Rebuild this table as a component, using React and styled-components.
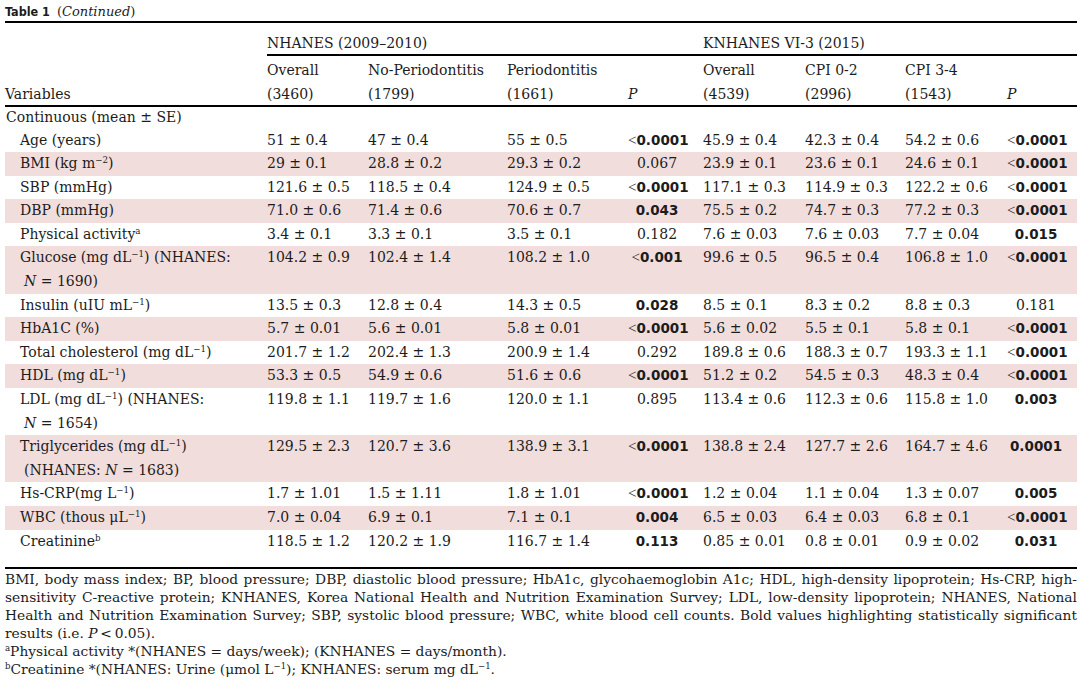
import React from 'react';
import styled, { createGlobalStyle } from 'styled-components';

const Global = createGlobalStyle`
  html, body { margin: 0; padding: 0; background: #fff; }
  body { font-family: "DejaVu Serif", serif; color: #1c1c1c; }
`;

const Page = styled.div`
  width: 1080px;
  height: 687px;
  box-sizing: border-box;
  padding: 0 3px 0 5px;
  overflow: hidden;
`;

const Caption = styled.div`
  height: 21px;
  display: flex;
  align-items: flex-end;
  gap: 7px;
  padding-bottom: 1px;
  box-sizing: border-box;
`;

const CapLabel = styled.span`
  font-family: "DejaVu Sans Condensed", "Liberation Sans Narrow", "Arial Narrow", "Liberation Sans", sans-serif;
  font-weight: 700;
  font-size: 12.5px;
  line-height: 16px;
`;

const CapNote = styled.span`
  font-family: "DejaVu Serif", serif;
  font-size: 13px;
  line-height: 16px;
  i { font-style: italic; }
`;

const Table = styled.table`
  width: 1072px;
  table-layout: fixed;
  border-collapse: separate;
  border-spacing: 0;
  font-size: 14px;
`;

const GroupCell = styled.th`
  font-weight: 400;
  text-align: left;
  vertical-align: bottom;
  height: 31px;
  padding: 0;
  line-height: 22px;
  border-top: 2px solid #000;
  border-bottom: ${p => (p.$rule ? '2px solid #000' : '0')};
`;

const HeadCell = styled.th`
  font-weight: 400;
  text-align: left;
  padding: 0;
  padding-top: ${p => (p.$first ? '3px' : '2px')};
  line-height: 22px;
  border-bottom: ${p => (p.$rule ? '2px solid #000' : '0')};
  white-space: nowrap;
`;

const Row = styled.tr`
  & > td {
    background: ${p => (p.$shade ? '#f1dedc' : 'transparent')};
  }
`;

const Cell = styled.td`
  padding: 0;
  padding-left: ${p => p.$indent || 0}px;
  padding-bottom: ${p => (p.$last ? '14px' : '0')};
  border-bottom: ${p => (p.$last ? '2px solid #000' : '0')};
  line-height: ${p => (p.$tight ? '21.5px' : '23.6px')};
  vertical-align: top;
  white-space: nowrap;
  text-align: left;
`;

const PCell = styled(Cell)`
  text-align: center;
  padding-right: ${p => p.$pr}px;
`;

const Sup = styled.sup`
  font-size: 0.62em;
  line-height: 0;
  vertical-align: 0.55em;
`;

const Cont = styled.span`
  display: inline-block;
  padding-left: 4px;
`;

const Bold = styled.span`
  font-family: "DejaVu Sans", sans-serif;
  font-weight: 700;
  font-size: 13.5px;
`;

const Lt = styled.span`
  font-family: "Liberation Serif", serif;
  font-size: 15px;
`;

const Notes = styled.div`
  padding-top: 1px;
  font-size: 13.8px;
  line-height: 18px;
`;

const NoteLine = styled.div`
  text-align: ${p => (p.$justify ? 'justify' : 'left')};
  text-align-last: ${p => (p.$justify ? 'justify' : 'left')};
  white-space: ${p => (p.$justify ? 'normal' : 'nowrap')};
`;

const rows = [
  { label: 'Age (years)', v: ['51 ± 0.4', '47 ± 0.4', '55 ± 0.5'], p1: ['<', '0.0001', 1], k: ['45.9 ± 0.4', '42.3 ± 0.4', '54.2 ± 0.6'], p2: ['<', '0.0001', 1] },
  { label: <>BMI (kg m<Sup>−2</Sup>)</>, shade: 1, v: ['29 ± 0.1', '28.8 ± 0.2', '29.3 ± 0.2'], p1: ['', '0.067', 0], k: ['23.9 ± 0.1', '23.6 ± 0.1', '24.6 ± 0.1'], p2: ['<', '0.0001', 1] },
  { label: 'SBP (mmHg)', v: ['121.6 ± 0.5', '118.5 ± 0.4', '124.9 ± 0.5'], p1: ['<', '0.0001', 1], k: ['117.1 ± 0.3', '114.9 ± 0.3', '122.2 ± 0.6'], p2: ['<', '0.0001', 1] },
  { label: 'DBP (mmHg)', shade: 1, v: ['71.0 ± 0.6', '71.4 ± 0.6', '70.6 ± 0.7'], p1: ['', '0.043', 1], k: ['75.5 ± 0.2', '74.7 ± 0.3', '77.2 ± 0.3'], p2: ['<', '0.0001', 1] },
  { label: <>Physical activity<Sup>a</Sup></>, v: ['3.4 ± 0.1', '3.3 ± 0.1', '3.5 ± 0.1'], p1: ['', '0.182', 0], k: ['7.6 ± 0.03', '7.6 ± 0.03', '7.7 ± 0.04'], p2: ['', '0.015', 1] },
  { label: <>Glucose (mg dL<Sup>−1</Sup>) (NHANES:<br /><Cont><i>N</i> = 1690)</Cont></>, shade: 1, v: ['104.2 ± 0.9', '102.4 ± 1.4', '108.2 ± 1.0'], p1: ['<', '0.001', 1], k: ['99.6 ± 0.5', '96.5 ± 0.4', '106.8 ± 1.0'], p2: ['<', '0.0001', 1] },
  { label: <>Insulin (uIU mL<Sup>−1</Sup>)</>, v: ['13.5 ± 0.3', '12.8 ± 0.4', '14.3 ± 0.5'], p1: ['', '0.028', 1], k: ['8.5 ± 0.1', '8.3 ± 0.2', '8.8 ± 0.3'], p2: ['', '0.181', 0] },
  { label: 'HbA1C (%)', shade: 1, v: ['5.7 ± 0.01', '5.6 ± 0.01', '5.8 ± 0.01'], p1: ['<', '0.0001', 1], k: ['5.6 ± 0.02', '5.5 ± 0.1', '5.8 ± 0.1'], p2: ['<', '0.0001', 1] },
  { label: <>Total cholesterol (mg dL<Sup>−1</Sup>)</>, v: ['201.7 ± 1.2', '202.4 ± 1.3', '200.9 ± 1.4'], p1: ['', '0.292', 0], k: ['189.8 ± 0.6', '188.3 ± 0.7', '193.3 ± 1.1'], p2: ['<', '0.0001', 1] },
  { label: <>HDL (mg dL<Sup>−1</Sup>)</>, shade: 1, v: ['53.3 ± 0.5', '54.9 ± 0.6', '51.6 ± 0.6'], p1: ['<', '0.0001', 1], k: ['51.2 ± 0.2', '54.5 ± 0.3', '48.3 ± 0.4'], p2: ['<', '0.0001', 1] },
  { label: <>LDL (mg dL<Sup>−1</Sup>) (NHANES:<br /><Cont><i>N</i> = 1654)</Cont></>, v: ['119.8 ± 1.1', '119.7 ± 1.6', '120.0 ± 1.1'], p1: ['', '0.895', 0], k: ['113.4 ± 0.6', '112.3 ± 0.6', '115.8 ± 1.0'], p2: ['', '0.003', 1] },
  { label: <>Triglycerides (mg dL<Sup>−1</Sup>)<br /><Cont>(NHANES: <i>N</i> = 1683)</Cont></>, shade: 1, v: ['129.5 ± 2.3', '120.7 ± 3.6', '138.9 ± 3.1'], p1: ['<', '0.0001', 1], k: ['138.8 ± 2.4', '127.7 ± 2.6', '164.7 ± 4.6'], p2: ['', '0.0001', 1] },
  { label: <>Hs-CRP(mg L<Sup>−1</Sup>)</>, v: ['1.7 ± 1.01', '1.5 ± 1.11', '1.8 ± 1.01'], p1: ['<', '0.0001', 1], k: ['1.2 ± 0.04', '1.1 ± 0.04', '1.3 ± 0.07'], p2: ['', '0.005', 1] },
  { label: <>WBC (thous μL<Sup>−1</Sup>)</>, shade: 1, v: ['7.0 ± 0.04', '6.9 ± 0.1', '7.1 ± 0.1'], p1: ['', '0.004', 1], k: ['6.5 ± 0.03', '6.4 ± 0.03', '6.8 ± 0.1'], p2: ['<', '0.0001', 1] },
  { label: <>Creatinine<Sup>b</Sup></>, v: ['118.5 ± 1.2', '120.2 ± 1.9', '116.7 ± 1.4'], p1: ['', '0.113', 1], k: ['0.85 ± 0.01', '0.8 ± 0.01', '0.9 ± 0.02'], p2: ['', '0.031', 1] },
];

const PVal = ({ p }) => (
  <>
    {p[0] && <Lt>{p[0]}</Lt>}
    {p[2] ? <Bold>{p[1]}</Bold> : p[1]}
  </>
);

const widths = [262, 101, 139, 121, 75, 102, 100, 102, 70];

export default function App() {
  return (
    <Page>
      <Global />
      <Caption>
        <CapLabel>Table 1</CapLabel>
        <CapNote>
          (<i>Continued</i>)
        </CapNote>
      </Caption>
      <Table>
        <colgroup>
          {widths.map((w, i) => (
            <col key={i} style={{ width: w }} />
          ))}
        </colgroup>
        <thead>
          <tr>
            <GroupCell />
            <GroupCell colSpan={4} $rule>NHANES (2009–2010)</GroupCell>
            <GroupCell colSpan={4} $rule>KNHANES VI-3 (2015)</GroupCell>
          </tr>
          <tr>
            <HeadCell $first />
            <HeadCell $first>Overall</HeadCell>
            <HeadCell $first>No-Periodontitis</HeadCell>
            <HeadCell $first>Periodontitis</HeadCell>
            <HeadCell $first />
            <HeadCell $first>Overall</HeadCell>
            <HeadCell $first>CPI 0-2</HeadCell>
            <HeadCell $first>CPI 3-4</HeadCell>
            <HeadCell $first />
          </tr>
          <tr>
            <HeadCell $rule>Variables</HeadCell>
            <HeadCell $rule>(3460)</HeadCell>
            <HeadCell $rule>(1799)</HeadCell>
            <HeadCell $rule>(1661)</HeadCell>
            <HeadCell $rule><i>P</i></HeadCell>
            <HeadCell $rule>(4539)</HeadCell>
            <HeadCell $rule>(2996)</HeadCell>
            <HeadCell $rule>(1543)</HeadCell>
            <HeadCell $rule><i>P</i></HeadCell>
          </tr>
        </thead>
        <tbody>
          <Row>
            <Cell colSpan={9} $indent={1} $tight>Continuous (mean ± SE)</Cell>
          </Row>
          {rows.map((r, i) => {
            const last = i === rows.length - 1;
            return (
              <Row key={i} $shade={r.shade}>
                <Cell $indent={15} $last={last}>{r.label}</Cell>
                {r.v.map((x, j) => (
                  <Cell key={j} $last={last}>{x}</Cell>
                ))}
                <PCell $pr={17} $last={last}><PVal p={r.p1} /></PCell>
                {r.k.map((x, j) => (
                  <Cell key={j} $last={last}>{x}</Cell>
                ))}
                <PCell $pr={12} $last={last}><PVal p={r.p2} /></PCell>
              </Row>
            );
          })}
        </tbody>
      </Table>
      <Notes>
        <NoteLine $justify>BMI, body mass index; BP, blood pressure; DBP, diastolic blood pressure; HbA1c, glycohaemoglobin A1c; HDL, high-density lipoprotein; Hs-CRP, high-</NoteLine>
        <NoteLine $justify>sensitivity C-reactive protein; KNHANES, Korea National Health and Nutrition Examination Survey; LDL, low-density lipoprotein; NHANES, National</NoteLine>
        <NoteLine $justify>Health and Nutrition Examination Survey; SBP, systolic blood pressure; WBC, white blood cell counts. Bold values highlighting statistically significant</NoteLine>
        <NoteLine>results (i.e. <i>P</i>&thinsp;&lt;&thinsp;0.05).</NoteLine>
        <NoteLine><Sup>a</Sup>Physical activity *(NHANES = days/week); (KNHANES = days/month).</NoteLine>
        <NoteLine><Sup>b</Sup>Creatinine *(NHANES: Urine (μmol L<Sup>−1</Sup>); KNHANES: serum mg dL<Sup>−1</Sup>.</NoteLine>
      </Notes>
    </Page>
  );
}
